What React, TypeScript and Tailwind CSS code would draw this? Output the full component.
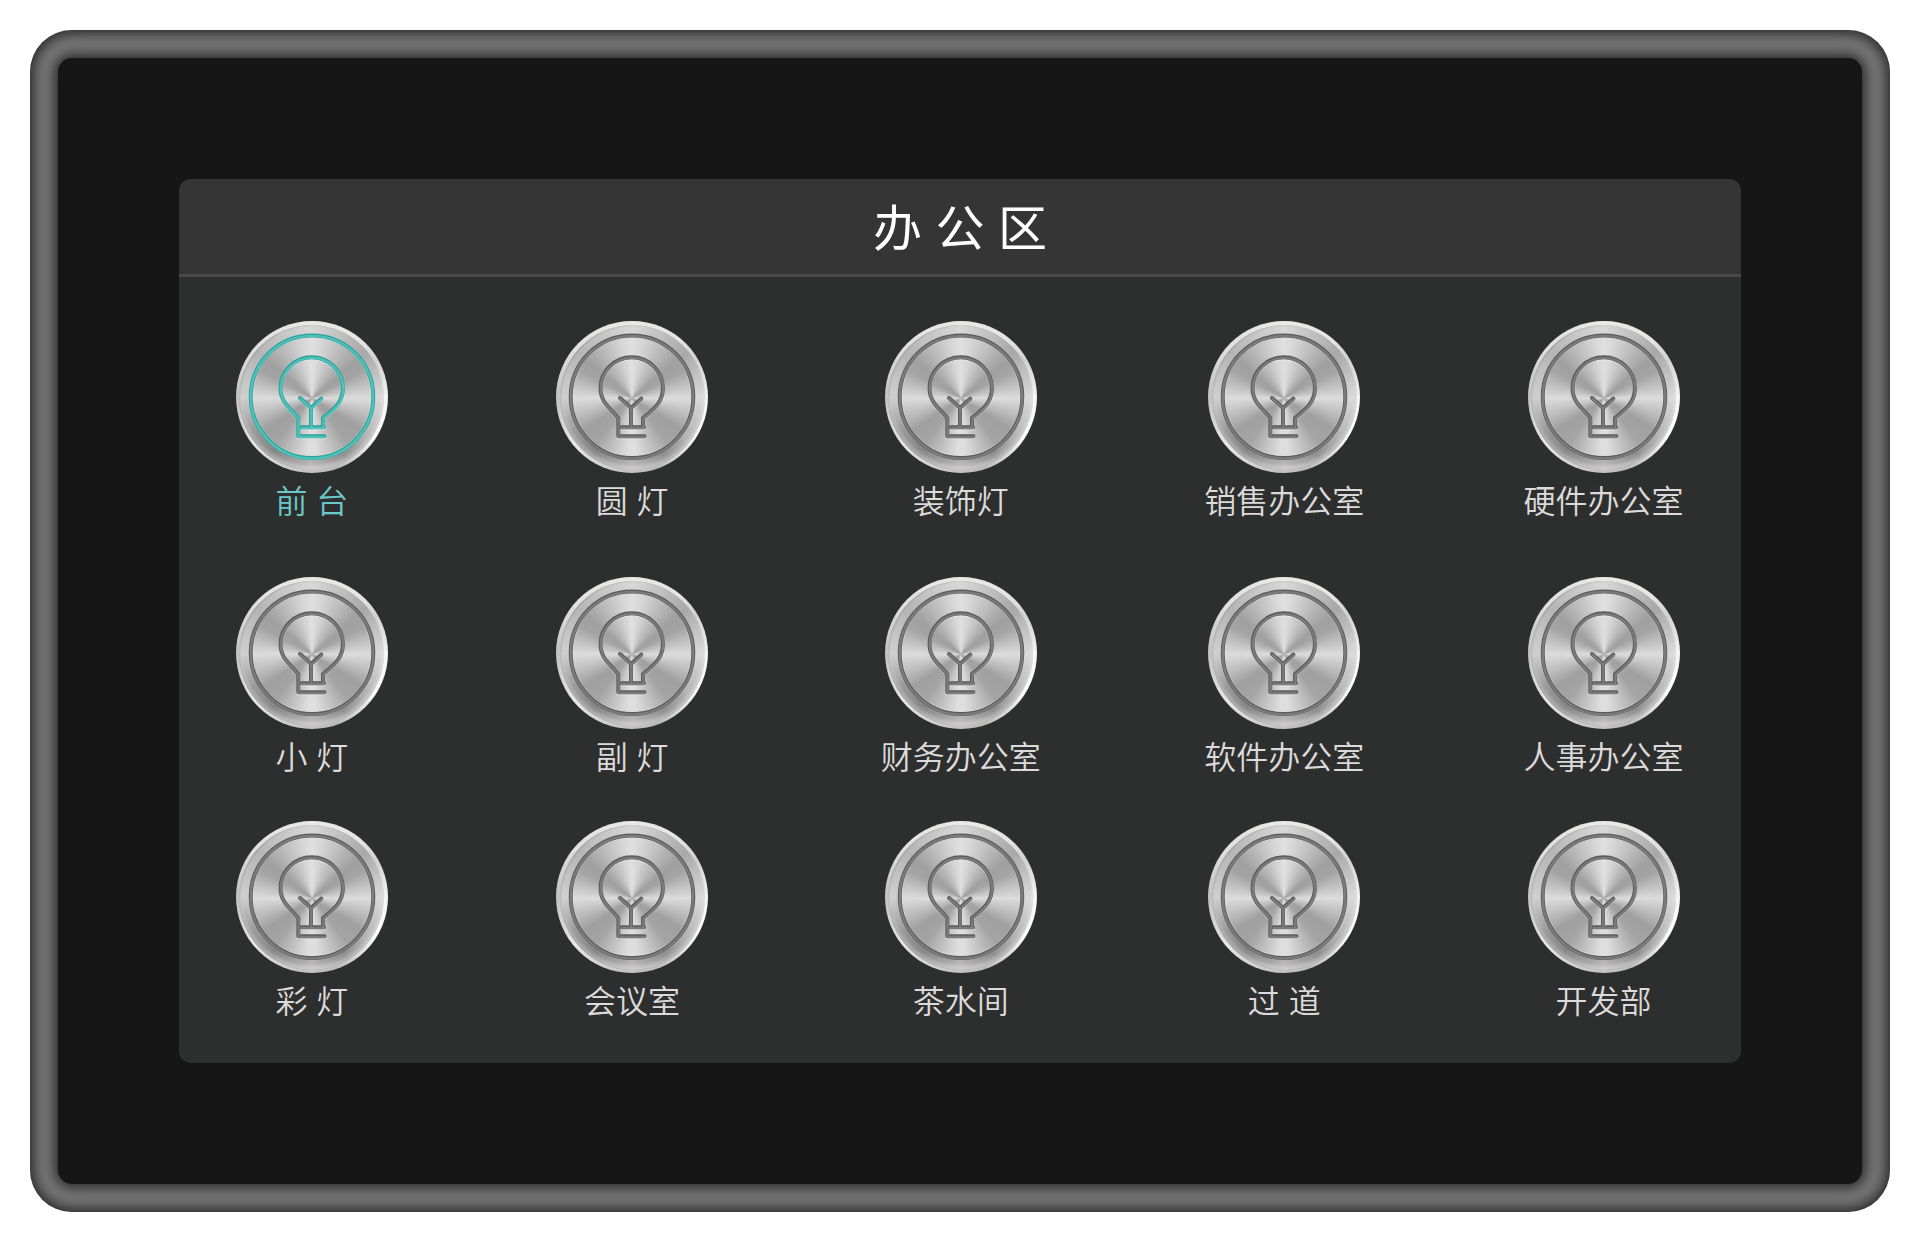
import { useState } from "react";
import clsx from "clsx";

type Light = {
  id: string;
  label: string;
};

const LIGHTS: Light[] = [
  { id: "reception", label: "前 台" },
  { id: "round", label: "圆 灯" },
  { id: "decor", label: "装饰灯" },
  { id: "sales", label: "销售办公室" },
  { id: "hardware", label: "硬件办公室" },
  { id: "small", label: "小 灯" },
  { id: "secondary", label: "副 灯" },
  { id: "finance", label: "财务办公室" },
  { id: "software", label: "软件办公室" },
  { id: "hr", label: "人事办公室" },
  { id: "color", label: "彩 灯" },
  { id: "meeting", label: "会议室" },
  { id: "pantry", label: "茶水间" },
  { id: "corridor", label: "过 道" },
  { id: "dev", label: "开发部" },
];

const BULB =
  "M88.5 115.3H62.3V97.2C54.5 87.5 44.5 81 44.5 67.5A31.2 31.2 0 0 1 106.9 67.5C106.9 82 96.5 89 87 97V106.3";
const FILAMENT = "M64 77L75 87L85.3 77.7M75 87V106.3M65.5 106.3H88";

function Engraving({ on }: { on: boolean }) {
  const base = on ? "#4cc2bb" : "#7b7b7b";
  const shade = on ? "#2f9f99" : "#5c5c5c";

  return (
    <svg viewBox="0 0 152 152" className="size-[152px] [grid-area:1/1]" fill="none" aria-hidden="true">
      {/* lit lower edge */}
      <g stroke="#ffffff" strokeOpacity="0.35" strokeWidth="4" strokeLinecap="round" transform="translate(0 1)">
        <path d={BULB} />
        <path d={FILAMENT} />
      </g>
      <circle cx="76" cy="75.7" r="59.5" stroke="#ffffff" strokeOpacity="0.3" />
      {/* groove shadow, then its floor */}
      <g stroke={shade} strokeWidth="4" strokeLinecap="round" strokeLinejoin="round">
        <circle cx="76" cy="75.7" r="61.3" />
        <path d={BULB} />
        <path d={FILAMENT} />
      </g>
      <g stroke={base} strokeWidth="2.4" strokeLinecap="round" strokeLinejoin="round">
        <circle cx="76" cy="76.2" r="61.3" />
        <g transform="translate(0.3 0.6)">
          <path d={BULB} />
          <path d={FILAMENT} />
        </g>
      </g>
    </svg>
  );
}

function Knob({ on }: { on: boolean }) {
  return (
    <span className="grid size-[152px] place-items-center rounded-full bg-[conic-gradient(#ebe9e8,#e6e5e4_40deg,#d2d1d0_60deg,#f4f4f4_90deg,#ffffff_120deg,#bdbbba_160deg,#c8c6c5_190deg,#e8e6e6_230deg,#c4c2c1_270deg,#e2e0df_310deg,#ebe9e8)]">
      <span className="size-[145px] rounded-full bg-[conic-gradient(#d8d8d8,#a8a8a8_50deg,#dadada_90deg,#b4b4b4_125deg,#8e8e8e_150deg,#b6b4b4_180deg,#868686_215deg,#9a9a9a_240deg,#cfcfcf_270deg,#b5b5b5_310deg,#d8d8d8)] shadow-[inset_0_-4px_4px_#ffffff66,inset_1px_0_2px_#00000033] [grid-area:1/1]" />
      <span className="size-[122px] rounded-full bg-[conic-gradient(at_50%_51%,#e0e0e0,#d6d6d6_10deg,#a0a0a0_50deg,#a4a4a4_62deg,#dcdcdc_90deg,#a0a0a0_122deg,#a4a4a4_142deg,#dedede_176deg,#dedede_184deg,#a4a4a4_218deg,#a0a0a0_236deg,#dcdcdc_270deg,#a4a4a4_298deg,#a0a0a0_310deg,#d6d6d6_350deg,#e0e0e0)] [grid-area:1/1]" />
      <Engraving on={on} />
    </span>
  );
}

function LightButton({ light, on, onToggle }: { light: Light; on: boolean; onToggle: () => void }) {
  return (
    <button
      type="button"
      aria-pressed={on}
      onClick={onToggle}
      className="flex cursor-pointer flex-col items-center gap-2"
    >
      <Knob on={on} />
      <span
        className={clsx(
          "text-[32px] leading-[42px] font-[350] whitespace-nowrap",
          on ? "text-[#6cc9c9]" : "text-[#dcdada]",
        )}
      >
        {light.label}
      </span>
    </button>
  );
}

export default function App() {
  const [active, setActive] = useState<string[]>(["reception"]);

  const toggle = (id: string) =>
    setActive((prev) => (prev.includes(id) ? prev.filter((x) => x !== id) : [...prev, id]));

  return (
    <div className="flex min-h-screen bg-white p-[30px] font-['Liberation_Sans','Noto_Sans_CJK_SC',sans-serif]">
      <div className="flex flex-1 rounded-[42px] bg-[#7b7b7b] p-7 shadow-[inset_0_0_14px_4px_#262626]">
        <div className="flex flex-1 rounded-[14px] bg-[#161616] p-[121px] shadow-[0_0_14px_4px_#262626]">
          <main className="flex flex-1 flex-col overflow-hidden rounded-xl bg-[#2d2f2e]">
            <header className="border-b-3 border-[#484948] bg-[#353535] pt-[18px] pb-[13px]">
              <h1 className="text-center text-[49px] leading-[64px] font-normal text-white">办 公 区</h1>
            </header>
            <div className="grid grid-cols-[170fr_171fr_187fr_158fr_179fr] grid-rows-[256px_244px_auto] gap-x-[150px] px-12 pt-11 pb-[38px]">
              {LIGHTS.map((light) => (
                <LightButton
                  key={light.id}
                  light={light}
                  on={active.includes(light.id)}
                  onToggle={() => toggle(light.id)}
                />
              ))}
            </div>
          </main>
        </div>
      </div>
    </div>
  );
}
